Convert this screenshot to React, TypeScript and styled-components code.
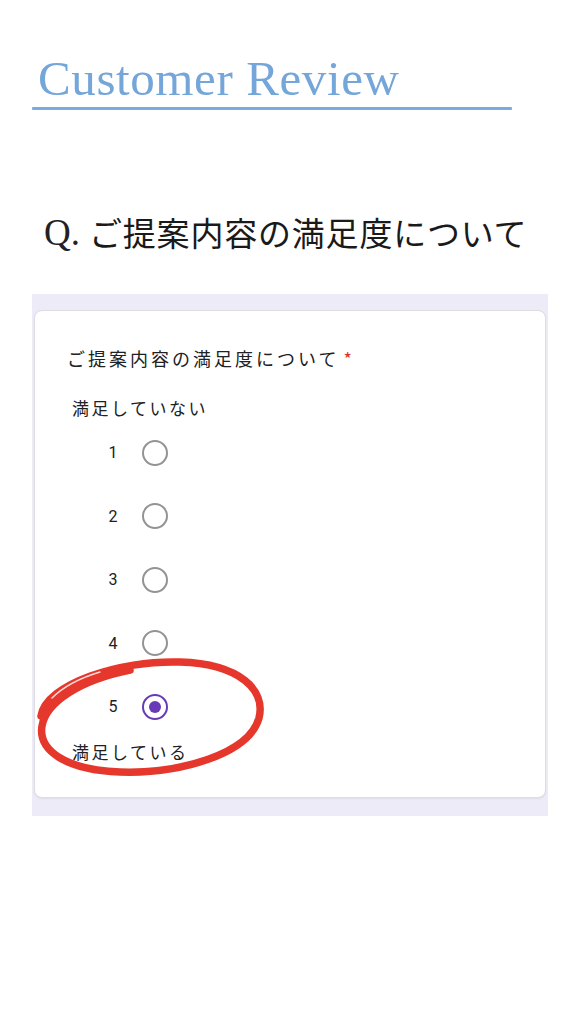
import React from "react";
import styled, { createGlobalStyle } from "styled-components";

const Global = createGlobalStyle`
  html, body { margin: 0; padding: 0; background: #ffffff; }
  * { box-sizing: border-box; }
`;

const Page = styled.div`
  position: relative;
  width: 576px;
  height: 1024px;
  background: #ffffff;
  overflow: hidden;
  font-family: "Noto Sans CJK JP", "Noto Sans", sans-serif;
`;

const Header = styled.header`
  padding: 51px 64px 0 32px;
`;

const Title = styled.h1`
  margin: 0 0 0 6px;
  font-family: "Liberation Serif", "DejaVu Serif", serif;
  font-weight: 400;
  font-size: 49px;
  line-height: 56px;
  letter-spacing: 0.6px;
  color: #74a6d9;
`;

const Rule = styled.div`
  width: 480px;
  height: 3px;
  background: #7aabdc;
  border-radius: 1px;
`;

const Question = styled.h2`
  margin: 98px 0 0 44px;
  height: 48px;
  display: flex;
  align-items: center;
  font-weight: 400;
  color: #1a1a1a;
`;

const QMark = styled.span`
  font-family: "Liberation Serif", "DejaVu Serif", serif;
  font-size: 37px;
  margin-right: 9px;
  color: #222;
`;

const QText = styled.span`
  font-family: "Noto Sans CJK JP", sans-serif;
  font-size: 33px;
  letter-spacing: 0.8px;
  font-weight: 400;
`;

const Panel = styled.section`
  margin: 38px 28px 0 32px;
  padding: 16px 2px 18px;
  background: #ecebf7;
`;

const Card = styled.div`
  background: #ffffff;
  border: 1px solid #dedde3;
  border-radius: 8px;
  padding: 35px 0 33px 32px;
  box-shadow: 0 1px 2px rgba(0, 0, 0, 0.06);
`;

const Prompt = styled.div`
  font-size: 18px;
  line-height: 24px;
  letter-spacing: 3px;
  color: #202124;
`;

const Star = styled.span`
  color: #d93025;
  margin-left: 4px;
`;

const ScaleLabel = styled.div`
  margin: 26px 0 0 5px;
  font-size: 17px;
  line-height: 24px;
  letter-spacing: 2.5px;
  color: #202124;
`;

const Options = styled.div`
  margin-top: 1px;
  display: flex;
  flex-direction: column;
`;

const Row = styled.label`
  height: 63.5px;
  display: flex;
  align-items: center;
  padding-left: 36px;
  gap: 19px;
`;

const Num = styled.span`
  width: 20px;
  text-align: center;
  font-family: Roboto, "Noto Sans", sans-serif;
  font-size: 16px;
  color: #202124;
`;

const Radio = styled.span<{ $checked?: boolean }>`
  width: 26px;
  height: 26px;
  border-radius: 50%;
  border: 2px solid ${(p) => (p.$checked ? "#673ab7" : "#939393")};
  display: flex;
  align-items: center;
  justify-content: center;
  &::after {
    content: "";
    width: 12px;
    height: 12px;
    border-radius: 50%;
    background: #673ab7;
    display: ${(p) => (p.$checked ? "block" : "none")};
  }
`;

const EndLabel = styled(ScaleLabel)`
  margin-top: 1px;
`;

const Scribble = styled.svg`
  position: absolute;
  left: 30px;
  top: 650px;
  width: 240px;
  height: 135px;
  pointer-events: none;
`;

export default function App() {
  return (
    <Page>
      <Global />
      <Header>
        <Title>Customer Review</Title>
        <Rule />
      </Header>
      <Question>
        <QMark>Q.</QMark>
        <QText>ご提案内容の満足度について</QText>
      </Question>
      <Panel>
        <Card>
          <Prompt>
            ご提案内容の満足度について<Star>*</Star>
          </Prompt>
          <ScaleLabel>満足していない</ScaleLabel>
          <Options>
            {[1, 2, 3, 4, 5].map((n) => (
              <Row key={n}>
                <Num>{n}</Num>
                <Radio $checked={n === 5} />
              </Row>
            ))}
          </Options>
          <EndLabel>満足している</EndLabel>
        </Card>
      </Panel>
      <Scribble viewBox="0 0 240 135">
        <path
          d="M 11 66 C 16 34, 90 10, 150 12 C 210 14, 236 40, 229 68 C 219 104, 150 124, 90 122 C 35 120, 8 100, 12 76 C 16 52, 50 30, 100 20"
          fill="none"
          stroke="#e5372c"
          strokeWidth="7.5"
          strokeLinecap="round"
          strokeLinejoin="round"
        />
        <path
          d="M 22 48 C 32 38, 50 28, 70 22"
          fill="none"
          stroke="#ffd9d6"
          strokeWidth="1.5"
          strokeLinecap="round"
        />
      </Scribble>
    </Page>
  );
}
